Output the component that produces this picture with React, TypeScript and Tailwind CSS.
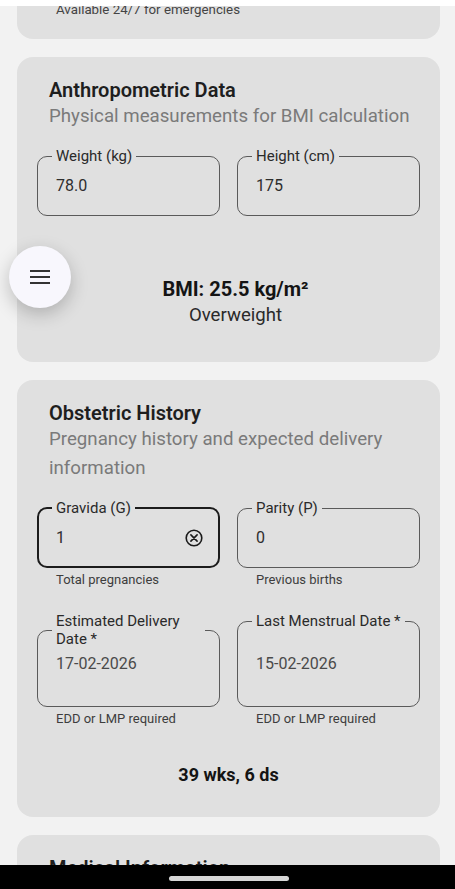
import React from "react";

function ClearIcon() {
  return (
    <svg viewBox="0 0 20 20" className="w-[20px] h-[20px] mr-[1px] shrink-0" fill="none" stroke="#1a1a1a">
      <circle cx="10" cy="10" r="7.8" strokeWidth="1.6" />
      <path d="M6.9 6.9 L13.1 13.1 M13.1 6.9 L6.9 13.1" strokeWidth="1.6" strokeLinecap="round" />
    </svg>
  );
}

function Field({
  label,
  value,
  focused = false,
  clear = false,
  helper,
  valueClass = "mt-[9px]",
  boxClass = "pb-[17px]",
  legendClass = "",
  valueColor = "text-[#2e2e2e]",
}: {
  label: React.ReactNode;
  value: string;
  focused?: boolean;
  clear?: boolean;
  helper?: string;
  valueClass?: string;
  boxClass?: string;
  legendClass?: string;
  valueColor?: string;
}) {
  return (
    <div className="flex flex-col min-w-0">
      <fieldset
        className={
          focused
            ? "border-2 border-[#1c1c1c] rounded-[10px] pl-[13px] pr-[13px] pb-[16px]"
            : "border border-[#5a5a5a] rounded-[10px] pl-[14px] pr-[14px] " + boxClass
        }
      >
        <legend className={"px-[4px] text-[15px] leading-[18px] text-[#2a2a2a] " + legendClass}>{label}</legend>
        <div className={"flex items-center justify-between pl-[4px] " + valueClass}>
          <span className={"text-[16px] leading-[24px] " + valueColor}>{value}</span>
          {clear && <ClearIcon />}
        </div>
      </fieldset>
      {helper && (
        <div className="mt-[4px] pl-[19px] text-[13px] leading-[16px] text-[#3d3d3d]">{helper}</div>
      )}
    </div>
  );
}

function CardHeader({ title, subtitle }: { title: string; subtitle: string }) {
  return (
    <div className="pl-[12px]">
      <div className="text-[20px] leading-[24px] font-semibold text-[#1e1e1e]">{title}</div>
      <div className="text-[18.7px] leading-[29px] text-[#7a7a7a]">{subtitle}</div>
    </div>
  );
}

export default function App() {
  return (
    <div className="relative w-[455px] h-[889px] overflow-hidden flex flex-col bg-[#f2f2f2] font-['Roboto',sans-serif]">
      <div className="h-[6px] bg-white shrink-0" />
      <div className="flex-1 overflow-hidden flex flex-col ml-[17px] mr-[15px]">
        {/* previous card (cut off) */}
        <div className="h-[33px] shrink-0 overflow-hidden rounded-b-[16px] bg-[#e0e0e0] pl-[39px]">
          <div className="-mt-[6px] text-[13.3px] leading-[20px] text-[#444]">Available 24/7 for emergencies</div>
        </div>

        {/* Anthropometric Data */}
        <div className="mt-[18px] shrink-0 rounded-[16px] bg-[#e0e0e0] pt-[21px] px-[20px] pb-[35px]">
          <CardHeader title="Anthropometric Data" subtitle="Physical measurements for BMI calculation" />
          <div className="mt-[16px] grid grid-cols-2 gap-x-[17px]">
            <Field label="Weight (kg)" value="78.0" />
            <Field label="Height (cm)" value="175" />
          </div>
          <div className="mt-[59px] pl-[14px] flex flex-col items-center">
            <div className="text-[20px] leading-[28px] font-bold text-[#141414]">BMI: 25.5 kg/m²</div>
            <div className="text-[18.6px] leading-[24px] text-[#2a2a2a]">Overweight</div>
          </div>
        </div>

        {/* Obstetric History */}
        <div className="mt-[18px] shrink-0 rounded-[16px] bg-[#e0e0e0] pt-[21px] px-[20px] pb-[28px]">
          <CardHeader title="Obstetric History" subtitle="Pregnancy history and expected delivery information" />
          <div className="mt-[16px] grid grid-cols-2 gap-x-[17px] items-start">
            <Field label="Gravida (G)" value="1" focused clear helper="Total pregnancies" />
            <Field label="Parity (P)" value="0" helper="Previous births" />
          </div>
          <div className="mt-[24px] grid grid-cols-2 gap-x-[17px] items-start">
            <Field
              label={
                <>
                  Estimated Delivery
                  <br />
                  Date *
                </>
              }
              legendClass="w-[153px]"
              value="17-02-2026"
              valueClass="mt-[4px]"
              boxClass="pb-[30px]"
              valueColor="text-[#4a4a4a]"
              helper="EDD or LMP required"
            />
            <Field
              label="Last Menstrual Date *"
              value="15-02-2026"
              valueClass="mt-[22px]"
              boxClass="pb-[30px]"
              valueColor="text-[#4a4a4a]"
              helper="EDD or LMP required"
            />
          </div>
          <div className="mt-[34px] text-center text-[18px] leading-[28px] font-bold text-[#141414]">39 wks, 6 ds</div>
        </div>

        {/* Medical Information (cut off) */}
        <div className="mt-[18px] shrink-0 rounded-t-[16px] bg-[#e0e0e0] pt-[21px] px-[20px] h-[120px]">
          <div className="pl-[12px] text-[20px] leading-[24px] font-semibold text-[#1e1e1e]">Medical Information</div>
        </div>
      </div>
      <div className="h-[24px] shrink-0 bg-black flex justify-center pt-[11px] pl-[3px]">
        <div className="w-[120px] h-[5px] rounded-full bg-[#d6d6d6]" />
      </div>

      {/* FAB */}
      <button className="absolute left-[9px] top-[246px] w-[62px] h-[62px] rounded-full bg-[#f8f7fd] shadow-[0_6px_18px_rgba(0,0,0,0.22)] flex items-center justify-center">
        <svg width="20" height="14" viewBox="0 0 20 14">
          <rect x="0" y="0" width="20" height="2" fill="#333" />
          <rect x="0" y="6" width="20" height="2" fill="#333" />
          <rect x="0" y="12" width="20" height="2" fill="#333" />
        </svg>
      </button>
    </div>
  );
}
